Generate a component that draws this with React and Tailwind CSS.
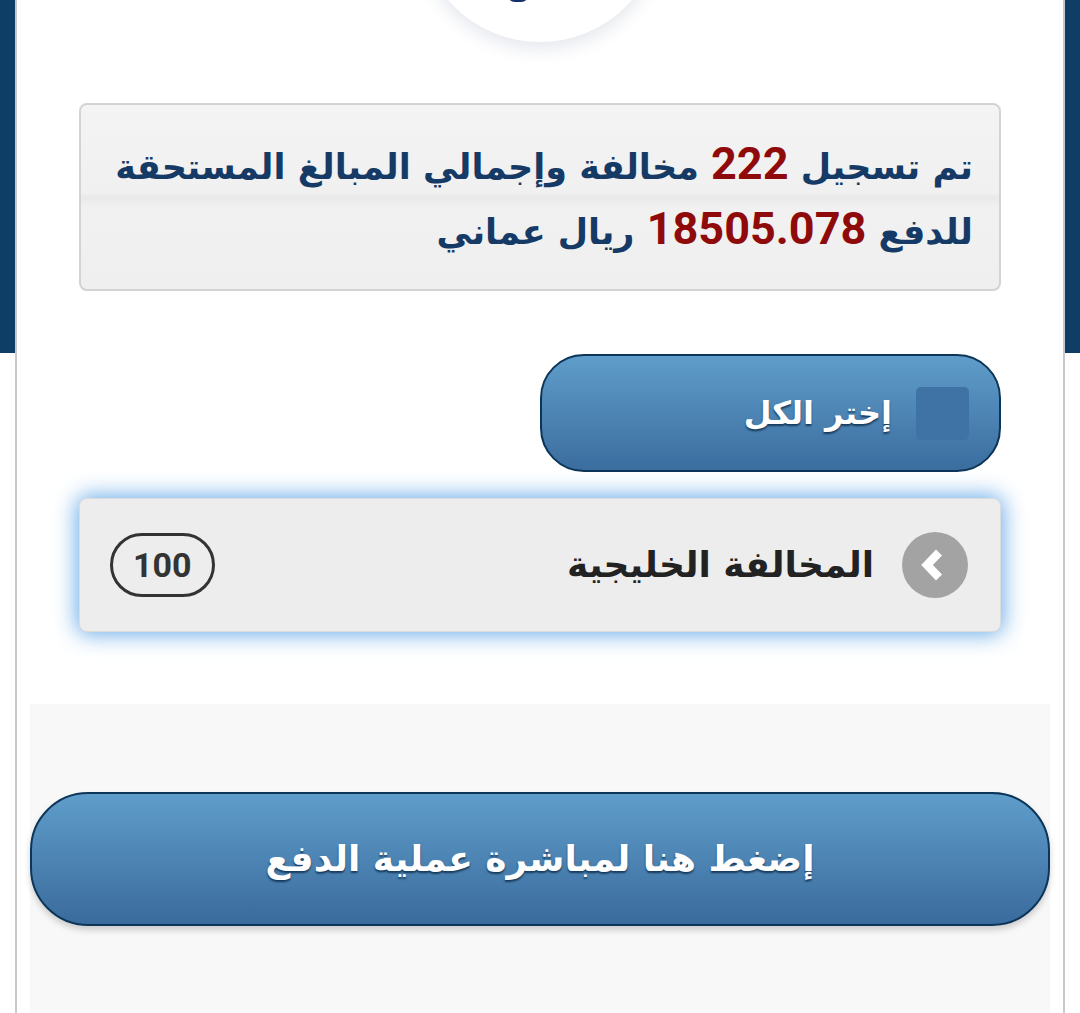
import React, { useState } from 'react';

const arabic = "font-['DejaVu_Sans','Noto_Sans',sans-serif]";
const num = "font-['Roboto','Liberation_Sans',sans-serif]";

const App = () => {
    const [allSelected, setAllSelected] = useState(false);

    return (
        <div
            dir="rtl"
            className="min-h-[1013px] bg-[linear-gradient(to_bottom,#0e3d66_353px,#ffffff_353px)] px-[15px]"
        >
            <div className="min-h-[1013px] bg-white border-x-2 border-[#c9c9c9] overflow-hidden flex flex-col">
                {/* logo circle, mostly scrolled off the top */}
                <div className="flex justify-center">
                    <div className="w-[244px] h-[244px] -mt-[202px] rounded-full bg-white shadow-[0_6px_18px_rgba(30,50,100,0.12)] flex items-end justify-center pb-[40px]">
                        <div className="w-[22px] h-[8px] rounded-b-full bg-[#13306a] translate-x-[-22px]" />
                    </div>
                </div>

                {/* summary */}
                <div className="mx-[62px] mt-[61px] rounded-lg border-2 border-[#d3d3d3] bg-[linear-gradient(to_bottom,#f4f4f4_0%,#f0f0f0_48%,#e9e9e9_50%,#f1f1f1_56%,#efefef_100%)] pr-[26px] pl-[20px] pt-[28px] pb-[26px]">
                    <p className={`${arabic} text-[#163a66] font-bold text-[35px] leading-[62px] text-right whitespace-nowrap`}>
                        تم تسجيل{' '}
                        <span className={`${num} text-[#8f0a0a] text-[45px]`}>222</span>{' '}
                        مخالفة وإجمالي المبالغ المستحقة
                        <br />
                        للدفع{' '}
                        <span className={`${num} text-[#8f0a0a] text-[45px]`}>18505.078</span>{' '}
                        ريال عماني
                    </p>
                </div>

                {/* select all */}
                <div className="mt-[63px] mx-[62px] flex">
                    <button
                        onClick={() => setAllSelected(!allSelected)}
                        className="w-[461px] h-[118px] rounded-[44px] border-2 border-[#0c3558] bg-[linear-gradient(to_bottom,#5f9dca,#3b6d9f)] flex items-center gap-[24px] pr-[30px]"
                    >
                        <span className="w-[53px] h-[53px] rounded-[5px] bg-[#3f73a5] flex items-center justify-center text-white text-[34px]">
                            {allSelected ? '✓' : ''}
                        </span>
                        <span className={`${arabic} text-white font-bold text-[32px] [text-shadow:0_2px_2px_#173a5c]`}>
                            إختر الكل
                        </span>
                    </button>
                </div>

                {/* list item */}
                <div className="mt-[26px] mx-[62px] h-[134px] rounded-lg border border-[#dcdcdc] bg-[#ededed] shadow-[0_0_22px_2px_rgba(85,160,230,0.9)] flex items-center pr-[32px] pl-[30px]">
                    <span className="w-[66px] h-[66px] rounded-full bg-[#a3a3a3] flex items-center justify-center shrink-0">
                        <svg width="40" height="40" viewBox="0 0 24 24" fill="none" stroke="white" strokeWidth="5" strokeLinecap="butt" strokeLinejoin="miter" className="-ml-[3px]">
                            <path d="M15 4.5 L7.8 12 L15 19.5" />
                        </svg>
                    </span>
                    <span className={`${arabic} mr-[28px] text-[#222] font-bold text-[36px]`}>
                        المخالفة الخليجية
                    </span>
                    <span className={`${num} mr-auto h-[64px] px-[20px] rounded-full border-[3px] border-[#333] text-[#333] font-bold text-[34px] flex items-center`}>
                        100
                    </span>
                </div>

                {/* pay */}
                <div className="mt-[72px] mx-[13px] flex-1 bg-[#f8f8f8] pt-[88px]">
                    <button className="w-full h-[134px] rounded-[58px] border-2 border-[#0c3558] bg-[linear-gradient(to_bottom,#5f9dca,#3a6b9d)] shadow-[0_4px_6px_rgba(0,0,0,0.18)] flex items-center justify-center">
                        <span className={`${arabic} text-white font-bold text-[36px] [text-shadow:0_2px_2px_#173a5c]`}>
                            إضغط هنا لمباشرة عملية الدفع
                        </span>
                    </button>
                </div>
            </div>
        </div>
    );
};

export default App;
